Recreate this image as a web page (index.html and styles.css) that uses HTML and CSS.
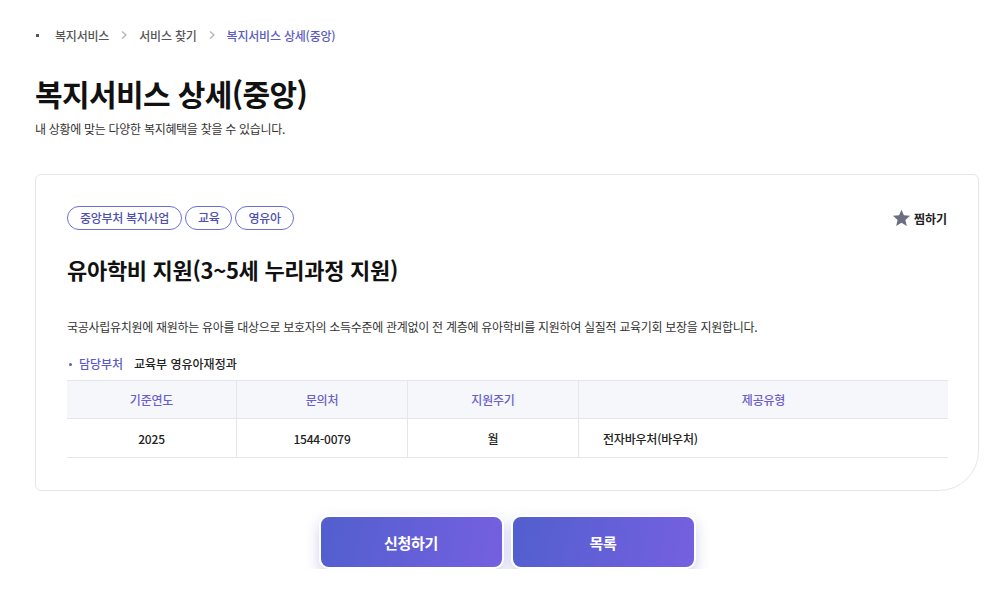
FILE: index.html
```
<!DOCTYPE html>
<html lang="ko">
<head>
<meta charset="utf-8">
<link rel="stylesheet" href="styles.css">
</head>
<body>
<div class="page">
  <nav class="crumbs">
    <span class="dot"></span>
    <span class="crumb">복지서비스</span>
    <span class="sep"><svg width="8" height="10" viewBox="0 0 8 10"><path d="M2 1.5 L6 5 L2 8.5" fill="none" stroke="#b5b5b5" stroke-width="1.3"/></svg></span>
    <span class="crumb">서비스 찾기</span>
    <span class="sep"><svg width="8" height="10" viewBox="0 0 8 10"><path d="M2 1.5 L6 5 L2 8.5" fill="none" stroke="#b5b5b5" stroke-width="1.3"/></svg></span>
    <span class="crumb current">복지서비스 상세(중앙)</span>
  </nav>
  <h1 class="title">복지서비스 상세(중앙)</h1>
  <p class="subtitle">내 상황에 맞는 다양한 복지혜택을 찾을 수 있습니다.</p>

  <section class="card">
    <div class="card-top">
      <div class="tags">
        <span class="tag">중앙부처 복지사업</span>
        <span class="tag">교육</span>
        <span class="tag">영유아</span>
      </div>
      <div class="fav">
        <svg width="19" height="18" viewBox="0 0 24 23"><path d="M12 0.8 L15.1 8 L22.9 8.7 L17 13.9 L18.8 21.6 L12 17.6 L5.2 21.6 L7 13.9 L1.1 8.7 L8.9 8 Z" fill="#6b6e80"/></svg>
        <span>찜하기</span>
      </div>
    </div>
    <h2 class="card-title">유아학비 지원(3~5세 누리과정 지원)</h2>
    <p class="desc">국공사립유치원에 재원하는 유아를 대상으로 보호자의 소득수준에 관계없이 전 계층에 유아학비를 지원하여 실질적 교육기회 보장을 지원합니다.</p>
    <div class="dept">
      <span class="dept-label">담당부처</span>
      <span class="dept-value">교육부 영유아재정과</span>
    </div>
    <div class="table">
      <div class="th">기준연도</div>
      <div class="th">문의처</div>
      <div class="th">지원주기</div>
      <div class="th">제공유형</div>
      <div class="td">2025</div>
      <div class="td">1544-0079</div>
      <div class="td">월</div>
      <div class="td left">전자바우처(바우처)</div>
    </div>
  </section>

  <div class="actions">
    <button class="btn">신청하기</button>
    <button class="btn">목록</button>
  </div>
</div>
</body>
</html>
```

FILE: styles.css
```
* { box-sizing: border-box; }
html, body { margin: 0; padding: 0; background: #fff; }
body {
  font-family: "Noto Sans CJK KR", "Noto Sans", sans-serif;
  color: #111;
}
.page {
  width: 1000px;
  padding: 24px 21px 0 35px;
}
.crumbs {
  display: flex;
  align-items: center;
  height: 22px;
  font-size: 12px;
  font-weight: 500;
  color: #555;
  letter-spacing: -0.2px;
}
.dot {
  width: 3px; height: 3px;
  background: #555;
  margin: 0 16px 0 1px;
}
.sep {
  display: inline-flex;
  margin: 0 11px 0 11px;
}
.crumb.current { color: #5b5bc4; }
.title {
  margin: 27px 0 0 0;
  font-size: 30px;
  font-weight: 700;
  line-height: 40px;
  letter-spacing: -0.6px;
  color: #111;
}
.subtitle {
  margin: 7px 0 0 0;
  font-size: 12px;
  line-height: 18px;
  color: #333;
  letter-spacing: -0.3px;
}
.card {
  margin-top: 36px;
  border: 1px solid #e6e6e8;
  border-radius: 6px 6px 40px 6px;
  padding: 31px 30px 31px 31px;
  height: 317px;
}
.card-top {
  display: flex;
  justify-content: space-between;
  align-items: center;
}
.tags { display: flex; gap: 3px; }
.tag {
  height: 24px;
  padding: 0 12px;
  border: 1px solid #6c6fd0;
  border-radius: 12px;
  font-size: 12px;
  font-weight: 500;
  line-height: 22px;
  color: #4c4fb0;
  letter-spacing: -0.3px;
}
.fav {
  display: flex;
  align-items: center;
  gap: 3px;
  font-size: 12px;
  font-weight: 700;
  color: #222;
  margin-right: 1px;
}
.card-title {
  margin: 23px 0 0 0;
  font-size: 22px;
  font-weight: 700;
  line-height: 32px;
  letter-spacing: -0.3px;
  color: #111;
}
.desc {
  margin: 32px 0 0 0;
  font-size: 12px;
  line-height: 20px;
  color: #333;
  letter-spacing: -0.3px;
}
.dept {
  display: flex;
  align-items: center;
  margin-top: 17px;
  font-size: 12px;
  font-weight: 500;
  line-height: 20px;
}
.dept-label {
  position: relative;
  padding-left: 12px;
  color: #5b5bc4;
  width: 67px;
}
.dept-label::before {
  content: "";
  position: absolute;
  left: 2px; top: 9px;
  width: 3px; height: 3px;
  border-radius: 50%;
  background: #5b5bc4;
}
.dept-value { color: #222; }
.table {
  margin-top: 6px;
  display: grid;
  grid-template-columns: 170px 171px 171px 1fr;
  border-top: 1px solid #e6e6ea;
}
.th, .td {
  display: flex;
  align-items: center;
  justify-content: center;
  font-size: 12px;
  border-bottom: 1px solid #e6e6ea;
  border-right: 1px solid #e6e6ea;
  letter-spacing: -0.2px;
}
.th:nth-child(4), .td:nth-child(8) { border-right: none; }
.th {
  height: 38px;
  background: #f6f7fb;
  color: #6a5fcc;
  font-weight: 500;
}
.td {
  height: 39px;
  color: #222;
  font-weight: 500;
}
.td.left { justify-content: flex-start; padding-left: 24px; }
.actions {
  display: flex;
  justify-content: center;
  gap: 7px;
  margin-top: 24px;
}
.btn {
  width: 185px;
  height: 54px;
  border: 2px solid #fff;
  border-radius: 10px;
  background: linear-gradient(100deg, #525fce 0%, #7560e0 100%);
  box-shadow: 0 6px 14px rgba(90, 90, 200, 0.28);
  color: #fff;
  font-family: "Noto Sans CJK KR", sans-serif;
  font-size: 15px;
  font-weight: 700;
  letter-spacing: -0.3px;
}
```
